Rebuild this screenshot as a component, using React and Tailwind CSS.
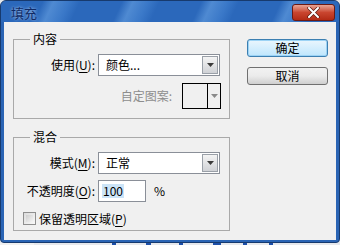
import React from "react";

function Arrow({ color = "#3a3a3a" }) {
  return (
    <svg width="7" height="4" viewBox="0 0 7 4">
      <path d="M0 0 L7 0 L3.5 4 Z" fill={color} />
    </svg>
  );
}

function Select({ value, w = "w-[122px]" }) {
  return (
    <div className={`${w} h-[22px] bg-white border border-[#8a8f98] flex items-center`}>
      <span className="flex-1 pl-[7px] text-black leading-none">{value}</span>
      <div className="w-[16px] h-[18px] mr-[1px] border border-[#9aa0a8] bg-gradient-to-b from-[#f4f4f4] to-[#d0d2d6] flex items-center justify-center">
        <Arrow />
      </div>
    </div>
  );
}

function U({ children }) {
  return <span className="underline underline-offset-2">{children}</span>;
}

export default function App() {
  return (
    <div className="w-[340px] h-[245px] bg-[#e6e8ec] overflow-hidden font-['Noto_Sans_CJK_SC','Noto_Sans',sans-serif] text-[12px] text-black">
      <div className="h-[243px] rounded-t-[6px] rounded-b-[4px] bg-[#2a64b4] border border-[#173a6e] flex flex-col px-[3px] pb-[2px]">
        {/* title bar */}
        <div className="h-[21px] -mx-[3px] rounded-t-[5px] bg-[repeating-linear-gradient(115deg,#2b68bb_0px,#2b68bb_38px,#4f8ad2_48px,#3a78c8_62px,#2b68bb_72px)] flex items-center pl-[10px] pr-[4px]">
          <span className="text-[13px] text-[#0f2a66] leading-none mt-[1px] [text-shadow:0_0_3px_#b9d4f4]">填充</span>
          <div className="flex-1" />
          <div className="w-[43px] h-[17px] mt-[1px] rounded-[3px] border border-[#6b1a14] bg-gradient-to-b from-[#e8a394] via-[#c9452f] to-[#b22a14] flex items-center justify-center">
            <svg width="13" height="11" viewBox="0 0 13 11">
              <path d="M2 1 L11 10 M11 1 L2 10" stroke="#5a1a10" strokeWidth="3.4" strokeLinecap="round" />
              <path d="M2 1 L11 10 M11 1 L2 10" stroke="#ffffff" strokeWidth="2" strokeLinecap="round" />
            </svg>
          </div>
        </div>
        {/* client area */}
        <div className="flex-1 bg-[#f0f0f0] flex pl-[9px] pt-[9px]">
          <div className="w-[217px] flex flex-col">
            <fieldset className="border border-[#a9a9a9] px-0 pt-[7px] pb-[9px]">
              <legend className="ml-[16px] px-[3px] leading-[16px]">内容</legend>
              <div className="flex items-center">
                <span className="w-[81px] text-right leading-none">使用(<U>U</U>):</span>
                <div className="ml-[3px]"><Select value="颜色..." /></div>
              </div>
              <div className="flex items-center mt-[7px]">
                <span className="w-[158px] text-right text-[#8d8d8d] leading-none">自定图案:</span>
                <div className="ml-[10px] w-[39px] h-[26px] border border-black flex">
                  <div className="w-[25px] border-r border-black" />
                  <div className="flex-1 flex items-center justify-center">
                    <Arrow color="#8a8a8a" />
                  </div>
                </div>
              </div>
            </fieldset>
            <fieldset className="mt-[10px] border border-[#a9a9a9] px-0 pt-[7px] pb-[5px]">
              <legend className="ml-[16px] px-[3px] leading-[16px]">混合</legend>
              <div className="flex items-center">
                <span className="w-[81px] text-right leading-none">模式(<U>M</U>):</span>
                <div className="ml-[3px]"><Select value="正常" /></div>
              </div>
              <div className="flex items-center mt-[6px]">
                <span className="w-[81px] text-right leading-none">不透明度(<U>O</U>):</span>
                <div className="ml-[3px] w-[48px] h-[22px] bg-white border border-[#8a8f98] flex items-center pl-[3px]">
                  <span className="bg-[#cce4f7] leading-[14px] px-[1px]">100</span>
                </div>
                <span className="ml-[8px] leading-none">%</span>
              </div>
              <div className="flex items-center mt-[10px] ml-[9px]">
                <div className="w-[13px] h-[13px] border border-[#8f8f8f] bg-gradient-to-br from-[#dcdcdc] to-[#f8f8f8] p-[2px]">
                  <div className="w-full h-full bg-gradient-to-br from-[#cfcfcf] to-[#f4f4f4]" />
                </div>
                <span className="ml-[3px] leading-none">保留透明区域(<U>P</U>)</span>
              </div>
            </fieldset>
          </div>
          <div className="ml-[17px] pt-[8px] flex flex-col gap-[10px]">
            <button className="w-[81px] h-[18px] rounded-[3px] border border-[#3c7fb1] bg-gradient-to-b from-[#eaf6fd] to-[#bee6fd] shadow-[inset_0_0_0_1px_#9cd3f5] text-[12px] leading-none text-black">
              确定
            </button>
            <button className="w-[81px] h-[18px] rounded-[3px] border border-[#707070] bg-gradient-to-b from-[#f2f2f2] via-[#ebebeb] to-[#cfcfcf] text-[12px] leading-none text-black">
              取消
            </button>
          </div>
        </div>
      </div>
      {/* background peeking below */}
      <div className="h-[2px] flex">
        <div className="w-[34px] bg-[#f0f0f0]" />
        <div className="w-[4px] bg-[#1d4fa8] ml-[78px]" />
        <div className="w-[5px] bg-[#1d4fa8] ml-[30px]" />
        <div className="w-[4px] bg-[#1d4fa8] ml-[28px]" />
        <div className="w-[8px] bg-[#1d4fa8] ml-[30px]" />
        <div className="w-[4px] bg-[#1d4fa8] ml-[22px]" />
        <div className="w-[4px] bg-[#1d4fa8] ml-[22px]" />
      </div>
    </div>
  );
}
